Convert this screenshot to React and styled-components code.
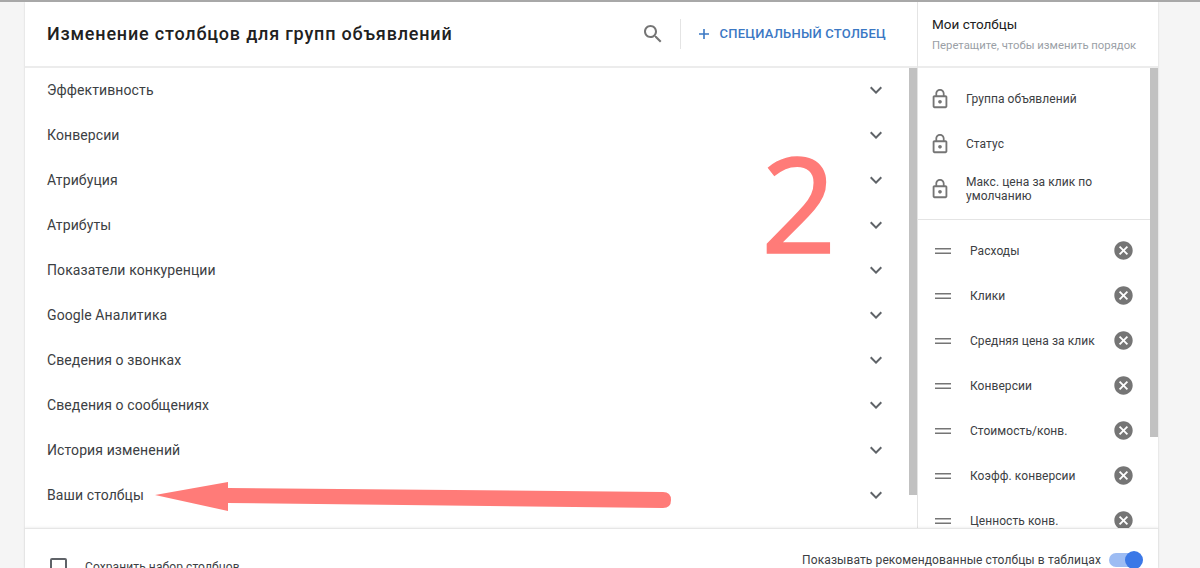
import React from 'react';
import styled, { createGlobalStyle } from 'styled-components';

const GlobalStyle = createGlobalStyle`
  html, body {
    margin: 0;
    height: 100%;
    overflow: hidden;
    background: #f5f5f5;
    font-family: Roboto, "Liberation Sans", sans-serif;
    color: #3c4043;
  }
`;

const Page = styled.div`
  position: relative;
  height: 568px;
  overflow: hidden;
  padding-left: 25px;
  border-top: 2px solid #a8a8a8;
  box-sizing: border-box;
`;

const Dialog = styled.div`
  width: 1133px;
  height: 566px;
  background: #fff;
  display: flex;
  flex-direction: column;
  box-shadow: 0 0 2px rgba(0, 0, 0, 0.15);
`;

const Columns = styled.div`
  display: flex;
  height: 526px;
  flex-shrink: 0;
`;

const LeftPane = styled.section`
  width: 892px;
  display: flex;
  flex-direction: column;
`;

const RightPane = styled.aside`
  width: 241px;
  border-left: 1px solid #e4e4e4;
  box-sizing: border-box;
  display: flex;
  flex-direction: column;
`;

const Header = styled.header`
  height: 66px;
  box-sizing: border-box;
  border-bottom: 2px solid #ececec;
  display: flex;
  align-items: center;
  padding: 0 31px 1px 22px;
  flex-shrink: 0;
`;

const Title = styled.h1`
  margin: 0;
  flex: 1;
  font-size: 18px;
  font-weight: 500;
  letter-spacing: 0.81px;
  color: #212121;
`;

const SearchButton = styled.span`
  display: flex;
  margin-right: 15px;
  color: #757575;
`;

const ActionGroup = styled.div`
  display: flex;
  align-items: center;
  height: 30px;
  padding-left: 17px;
  border-left: 1px solid #e4e4e4;
  color: #3b78c4;
  font-size: 13px;
  font-weight: 500;
  letter-spacing: 0.22px;
  gap: 10px;
`;

const Scroller = styled.div`
  position: relative;
  flex: 1;
  overflow: hidden;
`;

const ScrollThumb = styled.div`
  position: absolute;
  top: 0;
  right: 0;
  width: 8px;
  height: ${(props) => props.$height}px;
  background: #c1c1c1;
`;

const GroupList = styled.ul`
  list-style: none;
  margin: 0;
  padding: 0 33px 0 22px;
`;

const GroupRow = styled.li`
  height: 45px;
  display: flex;
  align-items: center;
  justify-content: space-between;
  font-size: 14px;
  letter-spacing: 0.1px;
  color: #3c4043;
  &:first-child {
    height: 44px;
  }
`;

const ChevronIcon = styled.svg`
  width: 24px;
  height: 24px;
  fill: #5f6368;
  margin-right: -4px;
`;

const MineHeader = styled.header`
  height: 66px;
  box-sizing: border-box;
  border-bottom: 2px solid #ececec;
  padding: 14px 0 0 14px;
  flex-shrink: 0;
`;

const MineTitle = styled.div`
  font-size: 13.5px;
  line-height: 17px;
  color: #212121;
`;

const MineHint = styled.div`
  margin-top: 6px;
  font-size: 11.3px;
  line-height: 14px;
  color: #9aa0a6;
`;

const FixedList = styled.div`
  padding-top: 8px;
  margin-right: 8px;
  height: 143px;
  border-bottom: 1px solid #e4e4e4;
`;

const ColumnRow = styled.div`
  height: 45px;
  display: flex;
  align-items: center;
  padding: 0 16px 0 ${(props) => (props.$locked ? 11 : 16)}px;
  font-size: 12px;
  line-height: 14px;
  letter-spacing: 0.06px;
  color: #3c4043;
`;

const RowIcon = styled.svg`
  flex-shrink: 0;
  width: ${(props) => props.$size}px;
  height: ${(props) => props.$size}px;
  fill: #757575;
`;

const RowLabel = styled.span`
  flex: 1;
  margin-left: ${(props) => props.$gap}px;
`;

const MineList = styled.div`
  margin-right: 8px;
  padding-top: 8px;
`;

const Footer = styled.footer`
  flex: 1;
  display: flex;
  align-items: flex-start;
  justify-content: space-between;
  border-top: 1px solid #e6e6e6;
  box-shadow: 0 -1px 2px rgba(0, 0, 0, 0.06);
  position: relative;
  background: #fff;
  padding: 29px 17px 0 25px;
`;

const CheckLabel = styled.label`
  display: flex;
  align-items: center;
  gap: 18px;
  font-size: 12px;
  letter-spacing: 0.1px;
  color: #3c4043;
`;

const CheckBox = styled.span`
  width: 13px;
  height: 13px;
  border: 2px solid #5f6368;
  border-radius: 2px;
`;

const ToggleLabel = styled.div`
  display: flex;
  align-items: center;
  gap: 8px;
  margin-top: -5px;
  font-size: 12px;
  letter-spacing: 0.1px;
  color: #3c4043;
`;

const ToggleTrack = styled.span`
  position: relative;
  width: 32px;
  height: 14px;
  border-radius: 7px;
  background: #9dbcf3;
`;

const ToggleKnob = styled.span`
  position: absolute;
  right: -2px;
  top: -2px;
  width: 18px;
  height: 18px;
  border-radius: 50%;
  background: #3b78e7;
`;

const BigNumber = styled.div`
  position: absolute;
  left: 761px;
  top: 120px;
  font-family: "Open Sans", sans-serif;
  font-size: 132px;
  font-weight: 400;
  line-height: 160px;
  color: #ff7b78;
  -webkit-text-stroke: 1.6px #ff7b78;
`;

const ArrowOverlay = styled.svg`
  position: absolute;
  left: 150px;
  top: 476px;
  width: 526px;
  height: 38px;
`;

const groups = [
  'Эффективность',
  'Конверсии',
  'Атрибуция',
  'Атрибуты',
  'Показатели конкуренции',
  'Google Аналитика',
  'Сведения о звонках',
  'Сведения о сообщениях',
  'История изменений',
  'Ваши столбцы',
];

const lockedColumns = ['Группа объявлений', 'Статус', 'Макс. цена за клик по умолчанию'];

const myColumns = [
  'Расходы',
  'Клики',
  'Средняя цена за клик',
  'Конверсии',
  'Стоимость/конв.',
  'Коэфф. конверсии',
  'Ценность конв.',
];

const Chevron = () => (
  <ChevronIcon viewBox="0 0 24 24">
    <path d="M16.59 8.59 12 13.17 7.41 8.59 6 10l6 6 6-6z" />
  </ChevronIcon>
);

const LockIcon = () => (
  <RowIcon $size={22} viewBox="0 0 24 24">
    <path d="M18 8h-1V6c0-2.76-2.24-5-5-5S7 3.24 7 6v2H6c-1.1 0-2 .9-2 2v10c0 1.1.9 2 2 2h12c1.1 0 2-.9 2-2V10c0-1.1-.9-2-2-2zM8.9 6c0-1.71 1.39-3.1 3.1-3.1s3.1 1.39 3.1 3.1v2H8.9V6zM18 20H6V10h12v10zm-6-3c1.1 0 2-.9 2-2s-.9-2-2-2-2 .9-2 2 .9 2 2 2z" />
  </RowIcon>
);

const DragIcon = () => (
  <RowIcon $size={18} viewBox="0 0 18 18">
    <path d="M1 6h16v1.6H1zM1 10.4h16V12H1z" />
  </RowIcon>
);

const RemoveIcon = () => (
  <RowIcon $size={21} viewBox="0 0 24 24">
    <path d="M12 1.5C6.2 1.5 1.5 6.2 1.5 12S6.2 22.5 12 22.5 22.5 17.8 22.5 12 17.8 1.5 12 1.5zm5.2 14.2-1.5 1.5-3.7-3.7-3.7 3.7-1.5-1.5 3.7-3.7-3.7-3.7 1.5-1.5 3.7 3.7 3.7-3.7 1.5 1.5-3.7 3.7 3.7 3.7z" />
  </RowIcon>
);

const App = () => {
  return (
    <>
      <GlobalStyle />
      <Page>
        <Dialog>
          <Columns>
            <LeftPane>
              <Header>
                <Title>Изменение столбцов для групп объявлений</Title>
                <SearchButton>
                  <svg width="24" height="24" viewBox="0 0 24 24" fill="currentColor">
                    <path d="M15.5 14h-.79l-.28-.27C15.41 12.59 16 11.11 16 9.5 16 5.91 13.09 3 9.5 3S3 5.91 3 9.5 5.91 16 9.5 16c1.61 0 3.09-.59 4.23-1.57l.27.28v.79l5 4.99L20.49 19l-4.99-5zm-6 0C7.01 14 5 11.99 5 9.5S7.01 5 9.5 5 14 7.01 14 9.5 11.99 14 9.5 14z" />
                  </svg>
                </SearchButton>
                <ActionGroup>
                  <svg width="12" height="12" viewBox="0 0 12 12" fill="currentColor">
                    <path d="M5.2 1h1.6v4.2H11v1.6H6.8V11H5.2V6.8H1V5.2h4.2z" />
                  </svg>
                  СПЕЦИАЛЬНЫЙ СТОЛБЕЦ
                </ActionGroup>
              </Header>
              <Scroller>
                <ScrollThumb $height={427} />
                <GroupList>
                  {groups.map((name) => (
                    <GroupRow key={name}>
                      {name}
                      <Chevron />
                    </GroupRow>
                  ))}
                </GroupList>
              </Scroller>
            </LeftPane>
            <RightPane>
              <MineHeader>
                <MineTitle>Мои столбцы</MineTitle>
                <MineHint>Перетащите, чтобы изменить порядок</MineHint>
              </MineHeader>
              <Scroller>
                <ScrollThumb $height={369} />
                <FixedList>
                  {lockedColumns.map((name) => (
                    <ColumnRow key={name} $locked>
                      <LockIcon />
                      <RowLabel $gap={15}>{name}</RowLabel>
                    </ColumnRow>
                  ))}
                </FixedList>
                <MineList>
                  {myColumns.map((name) => (
                    <ColumnRow key={name}>
                      <DragIcon />
                      <RowLabel $gap={18}>{name}</RowLabel>
                      <RemoveIcon />
                    </ColumnRow>
                  ))}
                </MineList>
              </Scroller>
            </RightPane>
          </Columns>
          <Footer>
            <CheckLabel>
              <CheckBox />
              Сохранить набор столбцов
            </CheckLabel>
            <ToggleLabel>
              Показывать рекомендованные столбцы в таблицах
              <ToggleTrack>
                <ToggleKnob />
              </ToggleTrack>
            </ToggleLabel>
          </Footer>
        </Dialog>
        <BigNumber>2</BigNumber>
        <ArrowOverlay viewBox="150 478 526 38">
          <path
            d="M155 495 L228 482 L228 488 L663 492 Q671 492 671 500 Q671 508 663 508 L228 503 L228 511 Z"
            fill="#ff7b78"
          />
        </ArrowOverlay>
      </Page>
    </>
  );
};

export default App;
